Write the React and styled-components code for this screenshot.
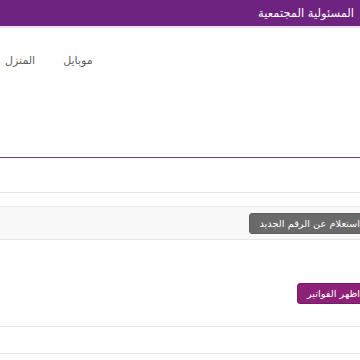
import React from 'react';
import styled, {createGlobalStyle} from 'styled-components';

const GlobalStyle = createGlobalStyle`
  html, body {
    margin: 0;
    padding: 0;
    background: #ffffff;
    overflow: hidden;
  }
  body {
    font-family: "DejaVu Sans", "Noto Sans", sans-serif;
  }
`;

const tabs = ['موبايل', 'المنزل'];

function App() {
  return (
    <>
      <GlobalStyle />
      <Page dir="rtl">
        <TopBar>
          <Title>المسئولية المجتمعية</Title>
        </TopBar>

        <TabArea>
          <TabList>
            {tabs.map(t => <Tab key={t}>{t}</Tab>)}
          </TabList>
        </TabArea>

        <Row $height={35} />
        <Row $height={14} />
        <Row $height={33} $shaded>
          <Action $variant="gray">استعلام عن الرقم الجديد</Action>
        </Row>
        <Row $height={87} $pad={43}>
          <Action $variant="purple">اظهر الفواتير</Action>
        </Row>
        <Row $height={27} />
      </Page>
    </>
  );
}

export default App;

const Page = styled.div`
  width: 360px;
  display: flex;
  flex-direction: column;
`;

const TopBar = styled.div`
  height: 26px;
  background: #6e2380;
  border-bottom: 1px solid #5c1d6b;
  box-shadow: 0 1px 0 #eddcf0;
  display: flex;
  align-items: center;
  padding-right: 6px;
`;

const Title = styled.div`
  color: #ffffff;
  font-size: 11.5px;
`;

const TabArea = styled.div`
  height: 131px;
  border-bottom: 1px solid #74407a;
  box-shadow: 0 1px 0 #e8d6e8, 0 -1px 0 #efe2ef;
  padding-top: 27px;
  box-sizing: border-box;
`;

const TabList = styled.div`
  display: flex;
  justify-content: flex-end;
  gap: 28px;
  padding-left: 5px;
`;

const Tab = styled.div`
  color: #606060;
  font-size: 11px;
`;

const Row = styled.div`
  height: ${p => p.$height}px;
  box-sizing: border-box;
  border-bottom: 1px solid #e6e6e6;
  background: ${p => (p.$shaded ? '#f8f8f8' : '#ffffff')};
  display: flex;
  align-items: ${p => (p.$pad ? 'flex-start' : 'center')};
  padding-top: ${p => p.$pad || 0}px;
`;

const Action = styled.div`
  margin-right: -10px;
  height: 19px;
  display: flex;
  align-items: center;
  padding: 0 9px;
  border-radius: 3px;
  color: #ffffff;
  font-size: 9.8px;
  background: ${p => (p.$variant === 'purple' ? '#8c2177' : '#6a6a6a')};
  border: 1px solid ${p => (p.$variant === 'purple' ? '#7a1b67' : '#5e5e5e')};
`;
